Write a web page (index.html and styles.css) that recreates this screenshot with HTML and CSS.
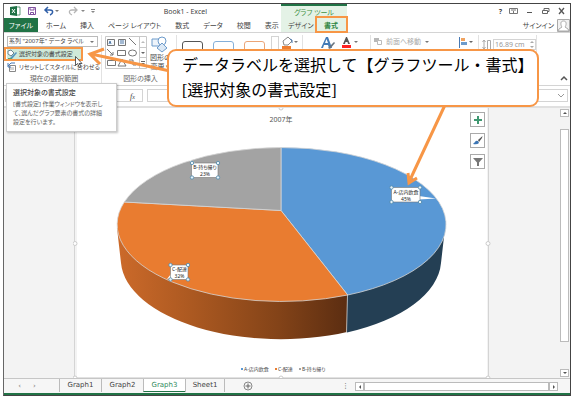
FILE: index.html
```
<!DOCTYPE html>
<html lang="ja">
<head>
  <meta charset="UTF-8" />
  <meta name="viewport" content="width=device-width, initial-scale=1" />
  <title>Book1 - Excel</title>
  <link rel="stylesheet" href="styles.css">
</head>
<body>
  <div class="window">
    <header class="header">
      <div class="titlebar">
        <svg class="quick-icons" width="90" height="12" viewBox="0 0 90 12">
          <path d="M0 2l7-1v10l-7-1z" fill="#1e7145"/>
          <path d="M7 2h3v8H7" fill="#fff" stroke="#1e7145" stroke-width=".7"/>
          <path d="M2 4l3 4M5 4L2 8" stroke="#fff"/>
          <path d="M18.500 2.500h7v7h-7zM20 2.500v2.500h4V2.500M20.500 9.500v-2h3v2" fill="#fff" stroke="#80519f"/>
          <path d="M38 2l-3 3 3 3M35.500 5H40c4 0 3 4 0 5" fill="none" stroke="#2f5fa8" stroke-width="1.500"/>
          <path d="M45 5h4l-2 2z" fill="#777"/>
          <path d="M64 2l3 3-3 3M66.500 5H62c-4 0-3 4 0 5" fill="none" stroke="#b5b5b5" stroke-width="1.300"/>
          <path d="M71 5h4l-2 2zM81 6h4l-2 2zM81 4h4v1h-4z" fill="#888"/>
        </svg>
        <h1 class="title">Book1 - Excel</h1>
      </div>
      <div class="context-title">グラフ ツール</div>
      <div class="window-buttons">
        <button aria-label="ヘルプ">?</button>
        <button aria-label="リボンの表示"><svg width="9" height="8"><path d="M.5 1.500h8v5h-8zM2 3h5M4.500 6V4" fill="none" stroke="#777"/></svg></button>
        <button aria-label="最小化"><svg width="9" height="8"><path d="M2 5.500h5" stroke="#555"/></svg></button>
        <button aria-label="元に戻す"><svg width="9" height="8"><path d="M1.500 3.500h5v3h-5zM3 3V1.500h5v3H7" fill="none" stroke="#666"/></svg></button>
        <button aria-label="閉じる"><svg width="9" height="8"><path d="M2 1l5 6M7 1L2 7" stroke="#555" stroke-width="1.300"/></svg></button>
      </div>
      <nav class="tabs">
        <button class="file-tab">ファイル</button>
        <button>ホーム</button>
        <button>挿入</button>
        <button>ページ レイアウト</button>
        <button>数式</button>
        <button>データ</button>
        <button>校閲</button>
        <button>表示</button>
      </nav>
      <nav class="context-tabs">
        <button>デザイン</button>
        <button class="active">書式</button>
      </nav>
      <div class="account">
        <a href="#">サインイン</a>
        <svg width="13" height="13"><path d="M.5.5h12v12H.5z" fill="#f1f1f1" stroke="#aaa"/><path d="M6.500 2C2.500 2 4 7 5 8l-3 2-1 2h11l-1-2-3-2c1-1 2.500-6-1.500-6z" fill="#fff" stroke="#aaa"/></svg>
      </div>
    </header>

    <section class="ribbon">
      <div class="group selection">
        <label class="picker">
          <select aria-label="グラフ要素"><option>系列 "2007年" データ ラベル</option></select>
          <i class="arrow"></i>
        </label>
        <button class="command highlighted">
          <svg width="11" height="11"><path d="M1 2l3-1 3 3-3 3-3-2z" fill="#fff" stroke="#6d8791"/><path d="M3 9l6-6 1 1-5 6z" fill="#5596c0"/><path d="M1 9h4v1H1z" fill="#55a176"/></svg>
          選択対象の書式設定
        </button>
        <button class="command">
          <svg width="11" height="11"><path d="M2.500 3.500h6v6h-6z" fill="#fff" stroke="#888"/><path d="M4 5v3M6 5v3" stroke="#aaa"/><path d="M1 1v4h3M1 4l3-3h4" fill="none" stroke="#4779b5"/></svg>
          リセットしてスタイルに合わせる
        </button>
        <span class="group-name">現在の選択範囲</span>
      </div>
      <div class="group shapes">
        <div class="group-row">
          <svg width="42" height="33" fill="none" stroke="#777">
            <path d="M.5.5h41v32H.5zM34.500.5v32M34.500 11.500h7M34.500 21.500h7" stroke="#c8c8c8"/>
            <path d="M2.500 3.500h7v6h-7zM13.500 3.500h7v6h-7z" fill="#f4f8fc"/>
            <path d="M4 8l1-3 1 3M15 5h4M15 7h4" stroke="#527ba8"/>
            <path d="M24 2l7 7M2 13l6 6M8 16v3H5M12.500 14.500h8v5h-8zM2.500 24.500h8v5h-8zM17 23l-4 7h8zM24 24h4v5h3"/>
            <ellipse cx="27.500" cy="17" rx="4" ry="3"/>
            <path d="M36 7h4l-2-2z" fill="#bbb" stroke="none"/>
            <path d="M36 16h4l-2 2zM36 27h4l-2 2zM36 25h4v1h-4z" fill="#666" stroke="none"/>
          </svg>
          <button class="change-shape">
            <svg width="18" height="17" stroke="#6d9bcb"><path d="M1 3h8v7H1z" fill="#eef4fb"/><circle cx="11" cy="5" r="4" fill="#fff"/><path d="M11 7l5 5-5 4-5-4z" fill="#dce9f6"/></svg>
            <span>図形の</span>
            <span>変更 ▾</span>
          </button>
        </div>
        <span class="group-name">図形の挿入</span>
      </div>
      <div class="group styles">
        <span class="swatch black"></span>
        <span class="swatch blue"></span>
        <span class="swatch orange"></span>
        <span class="scroll-arrows"></span>
        <svg width="18" height="14"><path d="M2 5l5-4 4 4-4 4H3z" fill="#fff" stroke="#888"/><path d="M9 3q3 0 2 4" fill="none" stroke="#4b7bb2"/><path d="M1 10h9v3H1z" fill="#ed7d31"/><path d="M13 5h4l-2 2z" fill="#777"/></svg>
      </div>
      <div class="group wordart">
        <svg width="17" height="16"><path d="M1 12L6 1h2l4 11H9L8 9H4l-1 3zM5 7h3L6.500 3z" fill="#447bb6"/><path d="M8 12l6-6 1 1-5 6z" fill="#687580"/></svg>
        <svg width="20" height="16"><path d="M3 8l3-7h1l3 7H8L7.500 6h-2L5 8z" fill="#555"/><path d="M2 9h9v3H2z" fill="#f22"/><path d="M14 5h4l-2 2z" fill="#777"/></svg>
      </div>
      <div class="group arrange">
        <button disabled>
          <svg width="8" height="9"><path d="M0 1h5v4H0z" fill="#b8b8b8"/><path d="M3.500 3.500h4v4h-4z" fill="#fff" stroke="#bbb"/></svg>
          前面へ移動 <i class="arrow"></i>
        </button>
        <svg width="16" height="12"><path d="M1.500 0v11" stroke="#4779b5"/><path d="M3 1h4v3H3z" fill="#f0a360"/><path d="M3 5h6v3H3z" fill="#6d9bcb"/><path d="M11 4h4l-2 2z" fill="#666"/></svg>
      </div>
      <div class="group size">
        <svg width="9" height="12"><path d="M2 1v9M.5 3L2 1l1.500 2M.5 8L2 10l1.500-2M5.500 1.500h3v9h-3z" fill="none" stroke="#aaa"/></svg>
        <label class="spinner">
          <input type="text" value="16.89 cm" aria-label="図形の高さ">
          <svg width="6" height="9"><path d="M1 3l2-2 2 2zM1 6h4L3 8z" fill="#aaa"/></svg>
        </label>
      </div>
      <button class="collapse" aria-label="リボンを折りたたむ"><svg width="8" height="6"><path d="M1 5l3-3 3 3" fill="none" stroke="#555" stroke-width="1.500"/></svg></button>
    </section>

    <div class="formula-bar">
      <div class="name-box"></div>
      <div class="fx">f<small>x</small></div>
      <label class="formula"><input type="text" aria-label="数式"><svg width="8" height="6"><path d="M1 1l3 3 3-3" fill="none" stroke="#999"/></svg></label>
    </div>

    <main class="workspace">
      <div class="gutter"></div>
      <div class="chart">
        <svg class="pie" viewBox="73 108 418 270">
          <defs>
            <linearGradient id="side" x1="117" x2="348" y1="0" y2="0" gradientUnits="userSpaceOnUse">
              <stop offset="0" stop-color="#cc6a2a"/>
              <stop offset=".32" stop-color="#ac5921"/>
              <stop offset=".7" stop-color="#834318"/>
              <stop offset="1" stop-color="#5b2d11"/>
            </linearGradient>
          </defs>
          <path d="M73 108h4v270h-4zM487 108h4v270h-4z" fill="#f3f3f3"/>
          <path d="M74.500 108v270M488.500 108v270" stroke="#d4d4d4"/>
          <path d="M77 377.500h410" stroke="#e2e2e2"/>
          <g fill="#fff" stroke="#ccc">
            <circle cx="75" cy="243.500" r="2"/><circle cx="488" cy="243.500" r="2"/>
            <circle cx="75" cy="378" r="2"/><circle cx="488" cy="378" r="2"/>
            <circle cx="281" cy="108" r="2"/><circle cx="281" cy="378" r="2"/>
          </g>
          <text class="chart-title" x="281" y="122">2007年</text>
          <!-- side walls -->
          <path d="M117 228L121 263A160 80 0 0 0 347 332V295L281 224z" fill="url(#side)"/>
          <path d="M445 228L441 263A160 80 0 0 1 347 332.500V295z" fill="#243f54"/>
          <!-- top face -->
          <g stroke="#d5d5d5" stroke-width=".8" stroke-linejoin="round">
            <path d="M281 210.500V147.500A164.500 77 0 0 1 347.700 295z" fill="#5998d5"/>
            <path d="M281 210.500L347.700 295A164.500 77 0 0 1 124.300 202z" fill="#e97c30"/>
            <path d="M281 210.500L124.300 202A164.500 77 0 0 1 281 147.500z" fill="#a3a3a3"/>
            <path d="M347.500 295L346.500 332.500"/>
          </g>
          <!-- data labels -->
          <g fill="#fff">
            <path d="M419 196l17 2.500-17 1zM192 163l-4-4 9 5zM171 274l-4 5 9-2z"/>
            <g stroke="#777" stroke-width=".6">
              <rect x="191.500" y="163" width="26.500" height="14.500"/>
              <rect x="391.500" y="187.500" width="28.500" height="14.500"/>
              <rect x="170.500" y="265" width="17.500" height="14.500"/>
            </g>
          </g>
          <g class="label">
            <text x="205" y="169">B-持ち帰り</text><text x="205" y="176">23%</text>
            <text x="406" y="194">A-店内飲食</text><text x="406" y="201">45%</text>
            <text x="179.500" y="271">C-配達</text><text x="179.500" y="278">32%</text>
          </g>
          <g fill="#e6f2fa" stroke="#4c87a8" stroke-width=".8">
            <circle cx="192" cy="163" r="1.700"/><circle cx="218" cy="163" r="1.700"/><circle cx="192" cy="177.500" r="1.700"/><circle cx="218" cy="177.500" r="1.700"/>
            <circle cx="391.500" cy="187.500" r="1.700"/><circle cx="420" cy="187.500" r="1.700"/><circle cx="391.500" cy="202" r="1.700"/><circle cx="420" cy="202" r="1.700"/>
            <circle cx="170.500" cy="265" r="1.700"/><circle cx="188" cy="265" r="1.700"/><circle cx="170.500" cy="279.500" r="1.700"/><circle cx="188" cy="279.500" r="1.700"/>
          </g>
          <g class="legend">
            <path d="M241 368h2v2h-2z" fill="#5998d5"/><text x="244" y="371">A-店内飲食</text>
            <path d="M275 368h2v2h-2z" fill="#e97c30"/><text x="278" y="371">C-配達</text>
            <path d="M299 368h2v2h-2z" fill="#a3a3a3"/><text x="302" y="371">B-持ち帰り</text>
          </g>
        </svg>
        <div class="chart-tools">
          <button aria-label="グラフ要素"><svg width="10" height="10"><path d="M5 1v8M1 5h8" stroke="#3f9871" stroke-width="2"/></svg></button>
          <button aria-label="グラフ スタイル"><svg width="10" height="10"><path d="M9.500 0L5 4l1 2 3-4z" fill="#555"/><path d="M5 5q-2-1-3 1L0 8q4 1 6-1z" fill="#3c76b5"/></svg></button>
          <button aria-label="グラフ フィルター"><svg width="10" height="10"><path d="M0 1h10L6 5.500V9H4V5.500z" fill="#777"/></svg></button>
        </div>
      </div>
      <div class="gutter"></div>
      <div class="scrollbar">
        <span class="up"></span>
        <span class="thumb"></span>
        <span class="down"></span>
      </div>
    </main>

    <footer class="sheets">
      <span class="sheet-nav"><button aria-label="前のシート">‹</button><button aria-label="次のシート">›</button></span>
      <button class="sheet">Graph1</button>
      <button class="sheet">Graph2</button>
      <button class="sheet current">Graph3</button>
      <button class="sheet last">Sheet1</button>
      <button class="add" aria-label="新しいシート"><svg width="10" height="10"><circle cx="5" cy="5" r="4" fill="none" stroke="#888"/><path d="M5 2.500v5M2.500 5h5" stroke="#666"/></svg></button>
      <span class="dots">⋮</span>
      <span class="hscroll"><i class="left"></i><i class="track"></i><i class="right"></i></span>
    </footer>
  </div>

  <div class="tooltip" role="tooltip">
    <strong>選択対象の書式設定</strong>
    <p>[書式設定] 作業ウィンドウを表示し<br>て、選んだグラフ要素の書式の詳細<br>設定を行います。</p>
  </div>

  <!-- annotation layer -->
  <div class="ring button-ring"></div>
  <div class="ring tab-ring"></div>
  <svg class="arrows" width="572" height="200">
    <g fill="none" stroke="#f79646" stroke-width="3">
      <path d="M170 71L91 54M104 49L90 54l10 10"/>
      <path d="M445 105L409 182M408 173l1 10 8-5"/>
    </g>
    <path d="M75.500 56.500v9l2-2 2 4 1.500-1-2-3h3z" fill="#fff" stroke="#333" stroke-width=".8"/>
  </svg>
  <div class="callout">データラベルを選択して【グラフツール・書式】<br><span>[</span>選択対象の書式設定<span>]</span></div>
</body>
</html>
```
FILE: styles.css
```
:root {
  --green: #217346;
  --orange: #f79646;
  --line: #d4d4d4;
  --gray: #f3f3f3;
  --text: #444;
}

* {
  box-sizing: border-box;
}

body {
  margin: 0;
  padding: 3px 1px 3px 3px;
  background: #fff;
  color: var(--text);
  font: 7px/9px "Noto Sans", "Noto Sans CJK JP", sans-serif;
  font-feature-settings: "palt";
}

button, input, select {
  margin: 0;
  padding: 0;
  border: none;
  background: none;
  color: inherit;
  font: inherit;
  font-feature-settings: inherit;
  white-space: nowrap;
}

svg {
  display: block;
  flex: none;
}

.window {
  border: 1px solid #444;
  border-left-color: #666;
  background: #fff;
}

/* title and tabs */
.header {
  display: grid;
  grid-template-columns: 277px 66px 1fr;
  grid-template-rows: 14px 14px;
}

.titlebar {
  display: flex;
  align-items: center;
  justify-content: space-between;
  padding: 0 74px 0 6px;
}

.title {
  margin: 0;
  font-size: 7px;
  font-weight: 400;
}

.context-title {
  padding-top: 2px;
  border-top: 2px solid var(--green);
  background: #e4f2e6;
  color: #3f9142;
  text-align: center;
}

.window-buttons {
  display: flex;
  align-items: center;
  justify-content: flex-end;
  gap: 7px;
  padding-right: 4px;
}

.window-buttons button:first-child {
  font-weight: 700;
}

.tabs {
  display: flex;
  align-items: center;
  gap: 14px;
}

.file-tab {
  align-self: stretch;
  width: 34px;
  margin-right: -6px;
  background: var(--green);
  color: #fff;
}

.context-tabs {
  display: flex;
  align-items: center;
  justify-content: space-between;
  padding: 0 9px 0 7px;
  background: #e4f2e6;
}

.context-tabs .active {
  color: #2e8540;
  font-weight: 700;
}

.account {
  display: flex;
  align-items: center;
  justify-content: flex-end;
  gap: 3px;
}

.account a {
  color: var(--text);
  text-decoration: none;
}

/* ribbon */
.ribbon {
  position: relative;
  display: flex;
  height: 54px;
  border-top: 1px solid var(--line);
  border-bottom: 1px solid var(--line);
}

.group {
  display: flex;
  margin: 2px 0;
  padding-top: 1px;
  border-right: 1px solid #e2e2e2;
}

.selection {
  flex-direction: column;
  width: 98px;
  padding-left: 3px;
}

.picker {
  display: flex;
  align-items: center;
  width: 91px;
  height: 11px;
  padding: 0 3px 0 1px;
  border: 1px solid #bbb;
  font-size: 6px;
}

.picker select {
  flex: 1;
  min-width: 0;
  appearance: none;
}

.arrow {
  border: 2px solid transparent;
  border-top-color: #777;
  border-bottom: none;
}

.command {
  display: flex;
  align-items: center;
  gap: 1px;
  height: 14px;
  font-size: 6px;
}

.highlighted {
  width: 75px;
  margin-top: 1px;
  background: #cfe9d9;
}

.group-name {
  margin-top: auto;
  color: #666;
  text-align: center;
}

.shapes {
  flex-direction: column;
  width: 75px;
  padding-left: 3px;
}

.group-row {
  display: flex;
  gap: 3px;
}

.change-shape {
  display: flex;
  flex-direction: column;
  align-items: center;
}

.styles {
  width: 126px;
  gap: 10px;
  padding: 6px 0 0 5px;
}

.swatch {
  width: 21px;
  height: 16px;
  border: 1px solid #555;
  border-radius: 3px;
}

.swatch.blue {
  border-color: #84afd9;
}

.swatch.orange {
  border-color: #eba577;
}

.scroll-arrows {
  width: 8px;
  margin: -5px -8px 0 -4px;
  border: 1px solid var(--line);
}

.styles svg {
  margin-top: -5px;
}

.wordart {
  width: 68px;
  gap: 3px;
  padding-left: 17px;
}

.arrange {
  width: 108px;
  justify-content: space-between;
  padding: 2px 4px 0 3px;
  color: #aaa;
}

.arrange button {
  display: flex;
  align-items: center;
  align-self: flex-start;
  gap: 4px;
}

.size {
  width: 58px;
  gap: 2px;
  padding: 4px 3px 0;
  color: #999;
}

.spinner {
  display: flex;
  align-items: center;
  width: 43px;
  height: 11px;
  border: 1px solid var(--line);
}

.spinner input {
  flex: 1;
  min-width: 0;
  padding-left: 1px;
}

.collapse {
  margin: auto 2px 4px auto;
}

/* formula bar */
.formula-bar {
  display: flex;
  gap: 4px;
  height: 22px;
  padding: 3px 2px 4px 1px;
  border-bottom: 2px solid #e0e0e0;
}

.name-box {
  width: 100px;
  border: 1px solid var(--line);
}

.fx {
  width: 34px;
  padding: 2px 0 0 20px;
  border: 1px solid var(--line);
  font: italic 8px/9px "Liberation Serif", serif;
}

.fx small {
  font-size: 6px;
}

.formula {
  display: flex;
  flex: 1;
  align-items: center;
  padding-right: 2px;
  border: 1px solid var(--line);
}

.formula input {
  flex: 1;
  min-width: 0;
}

/* chart sheet */
.workspace {
  display: flex;
  background: var(--gray);
}

.gutter {
  width: 69px;
}

.chart {
  position: relative;
  flex: 1;
  background: #fff;
}

.pie {
  width: 100%;
  height: auto;
}

.chart-title {
  fill: #555;
  text-anchor: middle;
}

.label {
  font-size: 5px;
  fill: #222;
  text-anchor: middle;
}

.legend {
  font-size: 5px;
  fill: #444;
}

.chart-tools {
  position: absolute;
  top: 4px;
  right: 6px;
  display: grid;
  gap: 6px;
}

.chart-tools button {
  display: grid;
  place-items: center;
  width: 15px;
  height: 15px;
  border: 1px solid #aaa;
  background: #fff;
}

.scrollbar {
  display: flex;
  flex-direction: column;
  width: 10px;
  padding: 1px 1px 1px 0;
}

.scrollbar span {
  display: grid;
  place-items: center;
  height: 8px;
  border: 1px solid #bbb;
  background: #fff;
}

.scrollbar .thumb {
  flex: 1;
  margin: 12px 0 27px;
}

.up::before, .down::before {
  content: "";
  border: 2px solid transparent;
  border-top: none;
  border-bottom-color: #555;
}

.down::before {
  border-top: 2px solid #555;
  border-bottom: none;
}

/* sheet tabs */
.sheets {
  display: flex;
  height: 17px;
  border-top: 1px solid #c6c6c6;
  border-bottom: 2px solid var(--green);
  background: #f6f6f6;
  font-family: "DejaVu Sans", sans-serif;
}

.sheet-nav {
  display: flex;
  justify-content: center;
  gap: 12px;
  width: 55px;
  padding-right: 9px;
  color: #777;
}

.sheet {
  width: 42px;
  margin-bottom: 1px;
  border-left: 1px solid #bbb;
}

.sheet.current {
  border-bottom: 1px solid var(--green);
  background: #fff;
  color: #2f8a5b;
}

.sheet.last {
  width: 40px;
  border-right: 1px solid #bbb;
}

.add {
  margin-left: 18px;
}

.dots {
  margin: auto 6px auto auto;
}

.hscroll {
  display: flex;
  width: 203px;
  height: 9px;
  margin: 3px 12px 0 0;
}

.hscroll i {
  display: grid;
  place-items: center;
  width: 9px;
  border: 1px solid #bbb;
  background: #fff;
}

.hscroll .track {
  flex: 1;
}

.left::before, .right::before {
  content: "";
  border: 2px solid transparent;
  border-left: none;
  border-right-color: #555;
}

.right::before {
  border-right: none;
  border-left: 2px solid #555;
}

/* overlays */
.tooltip {
  position: absolute;
  top: 83px;
  left: 6px;
  width: 111px;
  padding: 4px 6px;
  border: 1px solid #ccc;
  background: #fff;
  box-shadow: 1px 1px 2px rgba(0,0,0,0.25);
  white-space: nowrap;
}

.tooltip strong {
  font-weight: 500;
}

.tooltip p {
  margin: 3px 0 0;
  color: #666;
  font-size: 6px;
}

.ring {
  position: absolute;
  border: 2px solid var(--orange);
}

.button-ring {
  top: 47px;
  left: 4px;
  width: 79px;
  height: 14px;
}

.tab-ring {
  top: 16px;
  left: 315px;
  width: 33px;
  height: 17px;
}

.arrows {
  position: absolute;
  top: 0;
  left: 0;
}

.callout {
  position: absolute;
  top: 49px;
  left: 167px;
  padding: 1px 0 2px 13px;
  width: 372px;
  border: 2px solid var(--orange);
  border-radius: 9px;
  background: #fff;
  color: #000;
  font: 16px/25px "Noto Sans CJK JP", sans-serif;
  font-feature-settings: normal;
  white-space: nowrap;
}

.callout span {
  font-family: "Liberation Serif", serif;
}
```
